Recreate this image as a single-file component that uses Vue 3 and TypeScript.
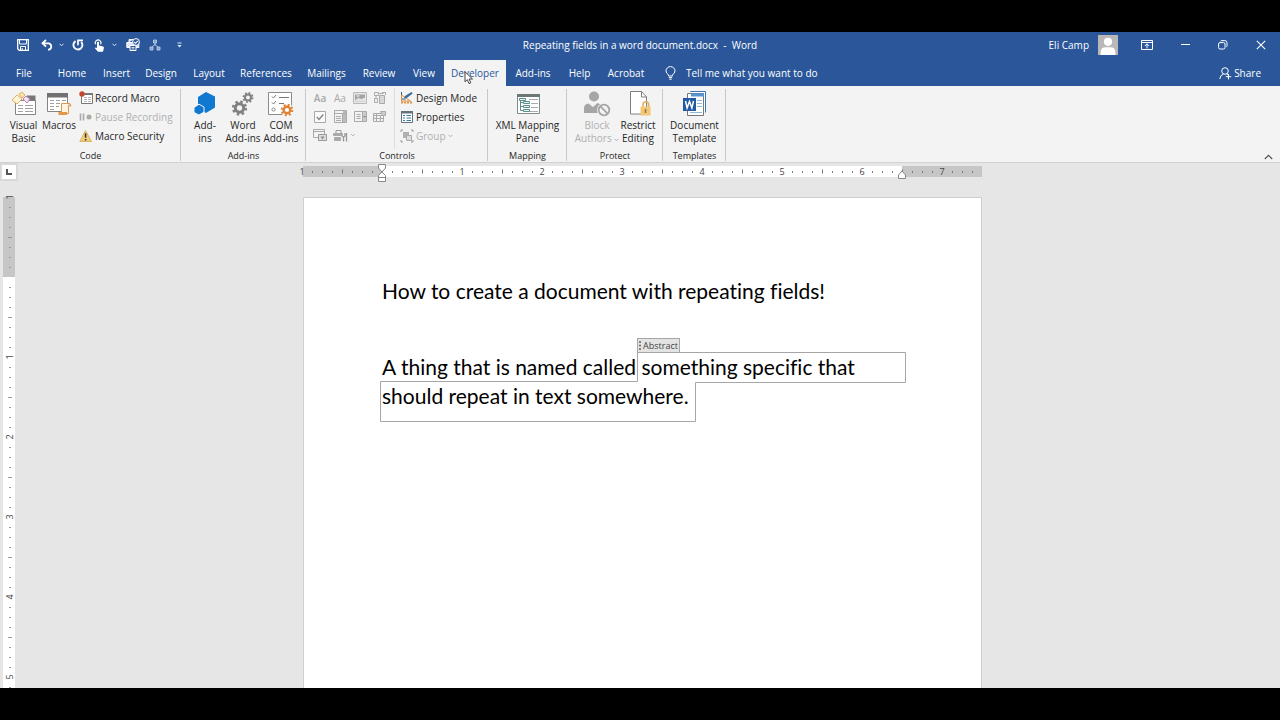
<script setup lang="ts">
import { computed, onBeforeUnmount, onMounted, ref } from 'vue'

interface Tick {
  pos: number
  label: string
  half: boolean
}

const leftTabs: string[] = ['File', 'Home', 'Insert', 'Design', 'Layout', 'References', 'Mailings', 'Review', 'View', 'Developer', 'Add-ins', 'Help', 'Acrobat']
const activeTab = 'Developer'

const INCH = 80
const STEP = INCH / 8

/* Eighth-inch marks, counted outwards from the margin at one inch. */
function makeTicks(length: number): Tick[] {
  const ticks: Tick[] = []
  for (let i = 0; i * STEP < length; i++) {
    const fromMargin = i - 8
    if (fromMargin === 0) continue
    const whole = fromMargin % 8 === 0
    ticks.push({
      pos: i * STEP,
      label: whole ? String(Math.abs(fromMargin / 8)) : '',
      half: !whole && fromMargin % 4 === 0,
    })
  }
  return ticks
}

/* Height taken by the title bar, ribbon, top ruler and the bands around the window. */
const CHROME = 229
const rulerLength = ref(window.innerHeight - CHROME)
const onResize = () => { rulerLength.value = window.innerHeight - CHROME }
onMounted(() => window.addEventListener('resize', onResize))
onBeforeUnmount(() => window.removeEventListener('resize', onResize))

const hTicks = makeTicks(680)
const vTicks = computed(() => makeTicks(rulerLength.value))
</script>

<template>
  <div class="screen">
    <div class="word">
      <header class="titlebar">
        <div class="quick">
          <button class="q save" aria-label="Save">
            <svg width="12" height="12" viewBox="0 0 12 12"><path d="M.7.7h10.6v10.6H2.2L.7 9.8z" fill="none" stroke="#fff" stroke-width="1.3" /><path d="M2.5 1v4h7V1M3.5 11V7.5h5V11M5.2 9v2" fill="none" stroke="#fff" /></svg>
          </button>
          <button class="q undo" aria-label="Undo">
            <svg width="13" height="12" viewBox="0 0 13 12"><path d="M5 1 1.5 4.3 5 7.6M1.8 4.3H8a3.4 3.4 0 0 1 0 6.4H7" fill="none" stroke="#fff" stroke-width="1.8" /></svg>
          </button>
          <button class="q arrow" aria-label="Undo list"><svg width="5" height="4" viewBox="0 0 5 4"><path d="m.5.8 2 2 2-2" fill="none" stroke="#dce6f5" /></svg></button>
          <button class="q redo" aria-label="Repeat">
            <svg width="12" height="12" viewBox="0 0 12 12"><path d="M3.600 2.100a4.500 4.500 0 1 0 5.600.8" fill="none" stroke="#fff" stroke-width="1.900" /><path d="M6 6.200V1.400h5" fill="none" stroke="#fff" stroke-width="1.700" /></svg>
          </button>
          <button class="q touch" aria-label="Touch mode">
            <svg width="11" height="13" viewBox="0 0 11 13"><path d="M1.700 5.200a2.800 2.800 0 1 1 4.800 0" fill="none" stroke="#fff" stroke-width="1.200" /><path d="M3 3.200q1-1.400 2 0v3.400l4 .9q1.100.4.9 1.600l-.9 3.700H4L.9 9.200q.4-1.200 2.100-.3z" fill="#fff" /></svg>
          </button>
          <button class="q arrow wide" aria-label="Touch mode list"><svg width="5" height="4" viewBox="0 0 5 4"><path d="m.5.8 2 2 2-2" fill="none" stroke="#dce6f5" /></svg></button>
          <button class="q print" aria-label="Print preview">
            <svg width="14" height="14" viewBox="0 0 14 14"><path d="M3 4V1.600h5M.8 4.500h12v5H.8z" fill="#dbe5f4" stroke="#fff" /><path d="M4 7.500h6v5H4z" fill="#2b579a" stroke="#fff" /><path d="M5.500 9.500h3M5.500 11h3" stroke="#fff" stroke-width=".8" /><circle cx="10" cy="4" r="3.400" fill="#2b579a" stroke="#fff" /><path d="m8.300 4 1.300 1.300 2.200-2.500" fill="none" stroke="#fff" stroke-width="1.100" /></svg>
          </button>
          <button class="q tree" aria-label="Organization">
            <svg width="12" height="12" viewBox="0 0 12 12"><path d="M6 3.500v3M6 5.500 2.500 8.500M6 5.500l3.500 3" stroke="#b7c9e6" /><path d="M4.500 1h3v3h-3zM1 8h3v3H1zM8 8h3v3H8z" fill="#7e9fce" stroke="#c5d4ec" stroke-width=".8" /></svg>
          </button>
          <button class="q more" aria-label="Customize Quick Access Toolbar"><svg width="5" height="6" viewBox="0 0 5 6"><path d="M.5 1h4" stroke="#dce6f5" /><path d="M.3 3h4.400L2.500 5.500z" fill="#dce6f5" /></svg></button>
        </div>
        <h1 class="doc-title">Repeating fields in a word document.docx&nbsp; - &nbsp;Word</h1>
        <div class="account">
          <span class="user">Eli Camp</span>
          <svg class="avatar" width="20" height="20" viewBox="0 0 20 20"><path d="M0 0h20v20H0z" fill="#b9b7b7" /><circle cx="10" cy="6.800" r="4.100" fill="#fff" /><path d="M2.600 20v-3q0-4.800 5-4.800h4.800q5 0 5 4.800v3z" fill="#fff" /></svg>
          <button class="win" aria-label="Ribbon display options"><svg width="12" height="10" viewBox="0 0 12 10"><path d="M.5.500h11v9H.5zM.5 2.500h11M6 8.500V4M3.800 6 6 3.800 8.200 6" fill="none" stroke="#fff" /></svg></button>
          <button class="win" aria-label="Minimize"><svg width="9" height="10" viewBox="0 0 9 10"><path d="M0 4.500h9" stroke="#fff" /></svg></button>
          <button class="win" aria-label="Restore"><svg width="10" height="10" viewBox="0 0 10 10"><rect x=".6" y="2.600" width="6.400" height="6.400" rx="1.400" fill="none" stroke="#fff" /><path d="M2.600 1.200Q3 .6 4 .6h2.800Q9 .6 9 2.800v2.800q0 1-.7 1.500" fill="none" stroke="#fff" /></svg></button>
          <button class="win" aria-label="Close"><svg width="10" height="10" viewBox="0 0 10 10"><path d="m.8.8 8.400 8.400M9.200.8.8 9.200" stroke="#fff" stroke-width="1.100" /></svg></button>
        </div>
      </header>

      <nav class="tabs">
        <div class="tablist">
          <button v-for="t in leftTabs" :key="t" class="tab" :class="{ active: t === activeTab }">
            {{ t }}
            <svg v-if="t === activeTab" class="pointer" width="10" height="14" viewBox="0 0 10 14"><path d="M1 .8v10l2.300-2.200 1.700 4 1.800-.8L5.100 8H8.500z" fill="#fff" stroke="#333" stroke-width=".9" /></svg>
          </button>
        </div>
        <label class="tellme">
          <svg width="11" height="14" viewBox="0 0 11 14"><path d="M3.600 10V8.800Q1 7.300 1 4.900a4.500 4.300 0 0 1 9 0q0 2.400-2.600 3.900V10zM3.800 11.600h3.400M4.300 13.200h2.400" fill="none" stroke="#fff" /></svg>
          <input type="text" aria-label="Tell me what you want to do" placeholder="Tell me what you want to do" />
        </label>
        <button class="share">
          <svg width="13" height="13" viewBox="0 0 13 13"><circle cx="6" cy="4" r="3.300" fill="none" stroke="#fff" /><path d="M.8 12Q1 8.300 4.400 7M7.600 7l1.400 1M9.500 7v5.400M6.800 9.700h5.400" fill="none" stroke="#fff" /></svg>
          Share
        </button>
      </nav>

      <section class="ribbon">
        <div class="group g-code">
          <div class="tools">
            <button class="big">
              <svg width="26" height="26" viewBox="0 0 26 26"><path d="M4.500 9.500h20v14h-20z" fill="#fff" stroke="#858585" /><path d="M16 4.500h8.500v5h-9z" fill="#777" /><path d="M7 14.500h5M14 14.500h8M7 17.500h5M14 17.500h8M7 20.500h5M14 20.500h8" stroke="#a0a0a0" /><path d="M1 9l5-5 5 4-5 5z" fill="#fdf3d8" stroke="#dfb563" /><path d="m8 3 3-2 3 3-3 3z" fill="#f9e3ae" stroke="#dfb563" /><path d="m12 8 3-3 4 3-3 4z" fill="#f4e2f0" stroke="#b57fae" /></svg>
              <span>Visual<br />Basic</span>
            </button>
            <button class="big">
              <svg width="26" height="26" viewBox="0 0 26 26"><path d="M1.500 2.500h20v18h-20z" fill="#fff" stroke="#858585" /><path d="M1 2h21v4.500H1z" fill="#717171" /><path d="M4 9.500h4M10 9.500h4M16 9.500h4M4 12.500h4M10 12.500h4M4 15.500h4M10 15.500h3M4 18.500h4" stroke="#a0a0a0" /><path d="M15.500 12.500h8.500q-1.800 1-1.500 3v7h-7z" fill="#fff4df" stroke="#d99a52" /><path d="M12.500 21h8.500v3h-8.500z" fill="#e39647" /><path d="M23 12.500q2 0 1.800 2.500h-2.300" fill="none" stroke="#d99a52" /></svg>
              <span>Macros</span>
            </button>
            <div class="stack">
              <button class="small"><svg width="14" height="14" viewBox="0 0 14 14"><path d="M2.500 2.500h11v10h-11z" fill="#fff" stroke="#777" /><path d="M5 2h8.500v2H5z" fill="#777" /><path d="M5 6.500h7M5 8.500h7M5 10.500h7" stroke="#b5b5b5" stroke-dasharray="3 1" /><circle cx="3" cy="3" r="2.700" fill="#c4472d" /></svg>Record Macro</button>
              <button class="small off" disabled><svg width="14" height="14" viewBox="0 0 14 14"><path d="M1.500 3.500v7M4.500 3.500v7" stroke="#aaa" stroke-width="1.600" /><circle cx="10" cy="7" r="2.500" fill="#aaa" /></svg>Pause Recording</button>
              <button class="small"><svg width="14" height="14" viewBox="0 0 14 14"><path d="M6.500 1.500 12.500 12.500H.8z" fill="#f0cd7c" stroke="#dfb55d" stroke-linejoin="round" /><path d="M6.600 4.200v4.600M6.600 10v1.600" stroke="#333" stroke-width="1.500" /></svg>Macro Security</button>
            </div>
          </div>
          <h2>Code</h2>
        </div>

        <div class="group g-addins">
          <div class="tools">
            <button class="big">
              <svg width="26" height="26" viewBox="0 0 26 26"><path d="m14 1 9 4.500v11L14 22l-8-5V6z" fill="#0f78d0" /><path d="m7 13.200 5 2.800v5L7 24l-5-2.500v-5z" fill="#0f78d0" stroke="#f3f3f3" /></svg>
              <span>Add-<br />ins</span>
            </button>
            <button class="big">
              <svg width="26" height="26" viewBox="0 0 26 26" fill="none" stroke="#808080"><circle cx="9.500" cy="17" r="4.200" stroke-width="3" /><circle cx="9.500" cy="17" r="6.400" stroke-width="2.400" stroke-dasharray="2.500 2.526" /><circle cx="18" cy="6.500" r="3" stroke-width="2" /><circle cx="18" cy="6.500" r="4.600" stroke-width="1.800" stroke-dasharray="1.800 1.813" /></svg>
              <span>Word<br />Add-ins</span>
            </button>
            <button class="big">
              <svg width="26" height="26" viewBox="0 0 26 26"><path d="M.5 1.500h23v22H.5z" fill="#fff" stroke="#8b8b8b" /><path d="m4 5.500 1.500 1.500L8 4M4 11.500 5.500 13 8 10M11 6.500h10M11 12.500h5" fill="none" stroke="#777" /><circle cx="5.500" cy="18.500" r="1.600" fill="none" stroke="#888" /><circle cx="19" cy="19" r="6.500" fill="#fff" /><circle cx="19" cy="19" r="3.300" fill="none" stroke="#df8338" stroke-width="2.400" /><circle cx="19" cy="19" r="5.200" fill="none" stroke="#df8338" stroke-width="2.200" stroke-dasharray="2 2.084" /></svg>
              <span>COM<br />Add-ins</span>
            </button>
          </div>
          <h2>Add-ins</h2>
        </div>

        <div class="group g-controls">
          <div class="tools">
            <div class="gallery">
              <button disabled class="aa rich" aria-label="Rich text content control">Aa</button>
              <button disabled class="aa" aria-label="Plain text content control">Aa</button>
              <button disabled aria-label="Picture"><svg width="14" height="14" viewBox="0 0 14 14"><path d="M.5 1.500h13v11H.5z" fill="#e8e8e8" stroke="#b8b8b8" /><path d="M2 3.500h10v7H2z" fill="#a4a4a4" /><path d="M2 9.500 5 7l3.500 1L12 6.500v4H2z" fill="#e4e4e4" /><path d="M3 4.500h4L5 6z" fill="#f4f4f4" /></svg></button>
              <button disabled aria-label="Building block gallery"><svg width="14" height="14" viewBox="0 0 14 14" fill="none" stroke="#aaa"><path d="M1.500 1.500h4v3h-4zM5.500 2.500h5M12.500 1v3M9 1.500h3.500M1.500 7.500h3v4h-3zM3 4.500v3" /><path d="M6.500 4.500h5v8h-5z" fill="#d8d8d8" /></svg></button>
              <button disabled aria-label="Check box"><svg width="12" height="12" viewBox="0 0 12 12" fill="none"><path d="M.5.500h11v11H.5z" fill="#fafafa" stroke="#aaa" /><path d="m2.800 6 2.200 2.400 4.300-5" stroke="#888" stroke-width="1.500" /></svg></button>
              <button disabled aria-label="Combo box"><svg width="13" height="13" viewBox="0 0 13 13" fill="none" stroke="#aaa"><path d="M.5.500h12v12H.5zM.5 3.500h12M8.500 3.500v9M2 6.500h5M2 8.500h5M2 10.500h5" /><path d="M9 4h3v8H9zM9 1h3v2H9z" fill="#bbb" stroke="none" /></svg></button>
              <button disabled aria-label="Drop-down list"><svg width="13" height="12" viewBox="0 0 13 12" fill="none" stroke="#aaa"><path d="M.5.500h12v10H.5zM8.500.500v10M2.500 3.500h4M2.500 5.500h4M2.500 7.500h4" /><path d="M9 1h3v9H9z" fill="#ccc" stroke="none" /><path d="M9.300 5h2.800l-1.400 2z" fill="#888" stroke="none" /></svg></button>
              <button disabled aria-label="Date picker"><svg width="14" height="13" viewBox="0 0 14 13" fill="none" stroke="#aaa"><path d="M.5 3.500h10v8H.5zM.5 5.500h10M.5 8.500h10M3.500 4v8M7.500 6v6" /><path d="M7.500 1.500h5v4h-3z" fill="#ccc" /></svg></button>
              <button disabled aria-label="Repeating section"><svg width="14" height="13" viewBox="0 0 14 13" fill="none" stroke="#aaa"><path d="M.5.500h11v8H.5zM.5 2.500h11" /><path d="M5.500 5.500h8v6h-8z" fill="#ddd" stroke="#999" /><path d="M7.500 7.500h4l-2 3z" fill="#888" stroke="none" /></svg></button>
              <button disabled class="legacy" aria-label="Legacy tools"><svg width="22" height="13" viewBox="0 0 22 13" fill="none" stroke="#aaa"><path d="M.5 4.500h8v2h-8zM1.500 8.500h6v3h-6z" fill="#aaa" /><path d="M3 4V1.500h5V4" stroke="#999" /><path d="M9 4v3l1.500 1v4.500M12 4v3l-1.500 1M13.500 4v8.500" stroke="#999" stroke-width="1.300" /><path d="m18 5 2 2 2-2" stroke="#bbb" /></svg></button>
            </div>
            <div class="stack split">
              <button class="small"><svg width="14" height="14" viewBox="0 0 14 14"><path d="M1.500 1v7h4" fill="none" stroke="#285c85" /><path d="M1 11.500h11" stroke="#df9147" stroke-width="2" stroke-dasharray="2 1" /><path d="m1.500 4 9 6h-9z" fill="none" stroke="#df9147" /><path d="m4 7.500 1-2.500 6.500-4 1.200 1.500-6 4.500z" fill="#376c9c" /></svg>Design Mode</button>
              <button class="small"><svg width="14" height="14" viewBox="0 0 14 14"><path d="M1.500 1.500h11v11h-11z" fill="#fff" stroke="#66717a" /><path d="M1 1h12v2.500H1z" fill="#66717a" /><path d="M3 5.500h2M3 8h2M3 10.500h2M6.500 5.500h4.500M6.500 8h4.500M6.500 10.500h4.500" stroke="#397aa5" stroke-width="1.200" /></svg>Properties</button>
              <button class="small off" disabled><svg width="14" height="14" viewBox="0 0 14 14"><path d="M3 3h6v6H3z" fill="#b0b0b0" /><path d="M6.500 6.500h5v5h-5z" fill="#ddd" stroke="#aaa" /><path d="M1 3V1h2M11 1h2v2M13 11v2h-2M3 13H1v-2" fill="none" stroke="#999" /></svg>Group<svg class="chev" width="5" height="4" viewBox="0 0 5 4"><path d="m.5.800 2 2 2-2" fill="none" stroke="#b0b0b0" /></svg></button>
            </div>
          </div>
          <h2>Controls</h2>
        </div>

        <div class="group g-mapping">
          <div class="tools">
            <button class="big">
              <svg width="26" height="26" viewBox="0 0 26 26"><path d="M2.500 3.500h22v19h-22z" fill="#fff" stroke="#818b8b" /><path d="M2 3h23v3H2z" fill="#6e7777" /><path d="M14 8.500h9M16 12.500h7M16 16.500h7M14 20.500h9" stroke="#aaa" /><path d="M5.500 8v11.500H9M5.500 11.500H9M5.500 15.500H9" fill="none" stroke="#5e8f8c" /><path d="M4.500 7.500h6v2h-6zM8.500 10.500h6v2h-6zM8.500 14.500h6v2h-6zM8.500 18.500h6v2h-6z" fill="#e5f5f2" stroke="#5e8f8c" /></svg>
              <span>XML Mapping<br />Pane</span>
            </button>
          </div>
          <h2>Mapping</h2>
        </div>

        <div class="group g-protect">
          <div class="tools">
            <button class="big off" disabled>
              <svg width="28" height="26" viewBox="0 0 28 26"><circle cx="11" cy="5.500" r="5" fill="#a6a6a6" /><path d="M1 22v-5q0-4 4.500-4.500L10 16l4.500-4 4 2v8z" fill="#a6a6a6" /><circle cx="21" cy="19" r="7" fill="#f3f3f3" /><circle cx="21" cy="19" r="5.300" fill="#f3f3f3" stroke="#a6a6a6" stroke-width="1.800" /><path d="m17.200 15.200 7.600 7.600" stroke="#a6a6a6" stroke-width="1.800" /></svg>
              <span>Block<br />Authors <svg class="chev" width="5" height="4" viewBox="0 0 5 4"><path d="m.5.800 2 2 2-2" fill="none" stroke="#b0b0b0" /></svg></span>
            </button>
            <button class="big">
              <svg width="26" height="26" viewBox="0 0 26 26"><path d="M5.500.500h11l5 5.500v17h-16z" fill="#fff" stroke="#808080" /><path d="M16.500.500V6h5" fill="none" stroke="#808080" /><path d="M18 16v-2.500a2.800 2.800 0 0 1 5.600 0V16" fill="none" stroke="#dfae57" stroke-width="1.600" /><path d="M15.500 15.500h10v9h-10z" fill="#f1c778" /><path d="M20.500 18v4" stroke="#9a7430" stroke-width="1.500" /></svg>
              <span>Restrict<br />Editing</span>
            </button>
          </div>
          <h2>Protect</h2>
        </div>

        <div class="group g-templates">
          <div class="tools">
            <button class="big">
              <svg width="26" height="26" viewBox="0 0 26 26"><path d="M8.500 1v-.500h15v21" fill="#fff" stroke="#3b77b4" /><path d="M5.500 2.500h16v22h-16z" fill="#fff" stroke="#777" /><path d="M9 2.500h13v3H9z" fill="#5695cf" /><path d="M15 9.500h5M15 12.500h5M15 15.500h5M8 21.500h12" stroke="#8bb6df" /><path d="M1 7h13v13H1z" fill="#2359a4" /><path d="m3.500 10 1.600 7 2.400-6.500L9.900 17l1.600-7" fill="none" stroke="#fff" stroke-width="1.500" /></svg>
              <span>Document<br />Template</span>
            </button>
          </div>
          <h2>Templates</h2>
        </div>
        <button class="collapse" aria-label="Collapse the ribbon"><svg width="9" height="6" viewBox="0 0 9 6"><path d="m.8 5 3.700-3.700L8.200 5" fill="none" stroke="#555" stroke-width="1.200" /></svg></button>
      </section>

      <main class="work">
        <button class="tabstop" aria-label="Tab selector"><svg width="6" height="6" viewBox="0 0 6 6"><path d="M1 0v5h5" fill="none" stroke="#555" stroke-width="2" /></svg></button>
        <div class="hruler">
          <svg width="687" height="19" viewBox="-4 0 687 19">
            <path d="M0 3h679v11H0z" fill="#fff" />
            <path d="M0 3h79v11H0zM599 3h80v11h-80z" fill="#c6c6c6" />
            <template v-for="t in hTicks" :key="t.pos">
              <text v-if="t.label" :x="t.pos - 1" y="12" text-anchor="middle" class="num">{{ t.label }}</text>
              <path v-else :d="t.half ? `M${t.pos - 0.5} 6.5v4` : `M${t.pos - 0.5} 8v2`" stroke="#777" />
            </template>
            <path d="M75.500 1.500h7V5L79 9l-3.500-4zM79 9l3.500 3.500v6h-7v-6zM75.500 14.500h7" fill="#fff" stroke="#888" />
            <path d="m599 8 3.500 4v3.500h-7V12z" fill="#fff" stroke="#888" />
          </svg>
        </div>
        <div class="vruler">
          <svg width="12" :height="rulerLength">
            <path :d="`M0 0h12v${rulerLength}H0z`" fill="#fff" />
            <path d="M0 0h12v80H0z" fill="#c6c6c6" />
            <template v-for="t in vTicks" :key="t.pos">
              <text v-if="t.label" :transform="`translate(10 ${t.pos}) rotate(-90)`" text-anchor="middle" class="num">{{ t.label }}</text>
              <path v-else :d="t.half ? `M5 ${t.pos + 0.5}h4` : `M6 ${t.pos + 0.5}h2`" stroke="#999" />
            </template>
          </svg>
        </div>
        <div class="canvas">
          <article class="page">
            <p>How to create a document with repeating fields!</p>
            <p class="body">
              A thing that is named called <span class="control">something specific that should repeat in text somewhere.</span>
              <svg class="outline" width="528" height="72" viewBox="0 0 528 72"><path d="M257.500.500h268v30h-210v39H.500v-40h257z" fill="none" stroke="#a6a6a6" /></svg>
              <button class="tag"><svg width="3" height="9" viewBox="0 0 3 9"><path d="M0 1h2M0 4.500h2M0 8h2" stroke="#666" stroke-width="1.500" /></svg>Abstract</button>
            </p>
          </article>
        </div>
      </main>
    </div>
  </div>
</template>

<style>
body { margin: 0; background: #000; }
</style>

<style scoped>
.screen {
  box-sizing: border-box;
  height: 100vh;
  padding: 32px 0;
  background: #000;
  font-family: "Open Sans", "Noto Sans", sans-serif;
  font-size: 10px;
  color: #262626;
}
.word { display: flex; flex-direction: column; height: 100%; overflow: hidden; background: #e6e6e6; }
button { display: flex; align-items: center; justify-content: center; margin: 0; padding: 0; border: 0; background: none; font: inherit; color: inherit; }
svg { display: block; flex: none; }

.titlebar { box-sizing: border-box; display: grid; grid-template-columns: 1fr auto 1fr; align-items: center; height: 28px; flex: none; padding-bottom: 2px; background: #2b579a; color: #fff; }
.quick { display: flex; align-items: center; padding-left: 11px; }
.q { height: 24px; }
.save, .undo { width: 24px; }
.arrow { width: 5px; }
.redo { width: 28px; }
.touch { width: 14px; }
.arrow.wide { width: 16px; }
.print, .tree { width: 22px; }
.more { width: 26px; }
.doc-title { margin: 0; font-size: 10px; font-weight: 400; }
.account { display: flex; align-items: center; justify-content: flex-end; }
.user { margin-right: 9px; }
.avatar { margin-right: 10px; }
.win { width: 38px; height: 26px; }

.tabs { display: flex; height: 26px; flex: none; background: #2b579a; color: #fff; }
.tablist { display: grid; grid-template-columns: 48px 48px 41px 48px 48px 66px 55px 50px 40px 62px 54px 39px 54px; }
.tab { position: relative; padding-bottom: 1px; white-space: nowrap; }
.tab.active { background: #f3f3f3; color: #2b579a; }
.pointer { position: absolute; left: 20px; top: 11px; }
.tellme { display: flex; align-items: center; gap: 10px; margin-left: 12px; padding-bottom: 1px; }
.tellme input { width: 160px; padding: 0; border: 0; outline: 0; background: none; font: inherit; color: #fff; }
.tellme input::placeholder { color: #fff; opacity: 1; }
.share { gap: 2px; margin-left: auto; margin-right: 19px; }

.ribbon { display: flex; height: 77px; flex: none; background: #f3f3f3; border-bottom: 1px solid #d2d2d2; box-sizing: border-box; }
.group { position: relative; box-sizing: border-box; display: flex; flex-direction: column; padding-top: 2px; }
.group::after { content: ""; position: absolute; right: 0; top: 3px; bottom: 1px; width: 1px; background: #c8c8c8; }
.g-code { width: 181px; }
.g-addins { width: 125px; }
.g-controls { width: 182px; }
.g-mapping { width: 79px; }
.g-protect { width: 96px; }
.g-templates { width: 63px; }
.tools { display: flex; flex: 1; }
.g-code .tools, .g-addins .tools { padding-left: 5px; }
.g-controls .tools { padding-left: 4px; }
.g-protect .tools { padding-left: 8px; }
h2 { margin: 0; font-size: 9px; font-weight: 400; line-height: 13px; text-align: center; }
.big { flex-direction: column; justify-content: flex-start; line-height: 13px; white-space: nowrap; }
.big > svg { margin: 3px 0 2px; }
.g-code .big { width: 37px; }
.g-code .big + .big { width: 34px; }
.g-addins .big { width: 38px; }
.g-mapping .big, .g-templates .big { width: 100%; }
.g-protect .big { width: 44px; }
.g-protect .big + .big { width: 38px; }
.off { color: #b0b0b0; }
.chev { display: inline-block; }
.stack { display: flex; flex-direction: column; align-items: flex-start; margin-left: 3px; }
.small { height: 19px; gap: 2px; white-space: nowrap; }
.gallery { display: grid; grid-template-columns: repeat(4, 20px); grid-template-rows: repeat(3, 19px); width: 84px; }
.aa { color: #a8a8a8; }
.rich { font-weight: 600; }
.legacy { width: 28px; }
.split { margin-left: 0; padding-left: 5px; border-left: 1px solid #ddd; }
.collapse { align-self: flex-end; width: 16px; height: 10px; margin-left: auto; margin-right: 4px; }

.work { display: grid; grid-template-columns: 20px 1fr 15px; grid-template-rows: 34px 1fr; flex: 1; min-height: 0; overflow: hidden; }
.tabstop { width: 18px; height: 18px; background: #fff; border: 2px solid #d9d9d9; }
.hruler { display: flex; justify-content: center; margin-right: 1px; }
.vruler { grid-column: 1; grid-row: 2; padding-left: 3px; }
.vruler svg { overflow: visible; }
.num { font-size: 9px; fill: #444; }
.canvas { grid-column: 2; grid-row: 2; overflow: hidden; }
.page { box-sizing: border-box; width: 679px; min-height: 880px; margin: 0 auto; padding: 78px; border: 1px solid #cfcfcf; background: #fff; color: #000; font-family: Lato, "Open Sans", sans-serif; font-size: 21px; line-height: 29px; font-variant-ligatures: none; }
.page p { margin: 0 0 47px; }
.page .body { position: relative; }
.outline { position: absolute; left: -2px; top: 0; }
.tag { position: absolute; left: 255px; top: -14px; gap: 1px; box-sizing: border-box; width: 43px; height: 15px; border: 1px solid #a6a6a6; background: #e3e3e3; color: #444; font-family: "Open Sans", sans-serif; font-size: 9px; line-height: 13px; }
</style>
